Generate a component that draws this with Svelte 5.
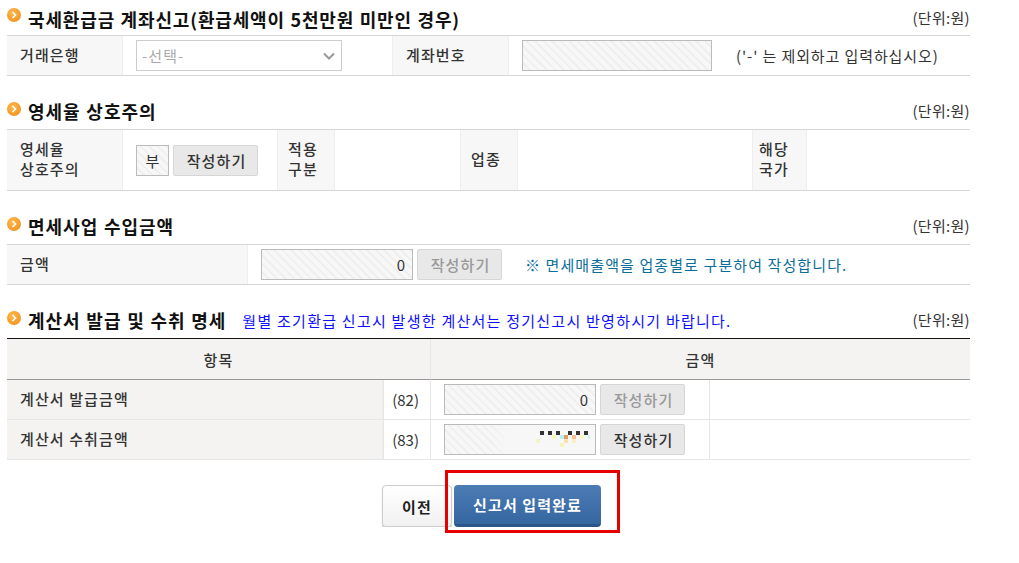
<script lang="ts">
	// mosaic over the blurred amount in row (83): x, y, w, h, colour
	const pixels: [number, number, number, number, string][] = [
		[540, 431, 4, 4, '#333'], [548, 431, 4, 4, '#333'], [556, 431, 4, 4, '#333'],
		[568, 431, 4, 4, '#333'], [576, 431, 4, 4, '#333'], [584, 431, 4, 4, '#333'],
		[552, 435, 4, 4, '#f8f8c0'], [560, 435, 4, 4, '#b8f0f4'], [564, 435, 4, 4, '#d9a060'],
		[572, 435, 4, 4, '#f8c090'], [580, 435, 4, 4, '#f8f8c0'], [588, 435, 2, 4, '#c0f4f8'],
		[536, 439, 4, 4, '#f4f4c8'], [564, 439, 4, 4, '#fce0b0'], [572, 439, 4, 4, '#f8f0c0'],
		[560, 443, 4, 4, '#f8f4b8']
	];
</script>

{#snippet heading(title: string, note?: string)}
	<div class="heading">
		<span class="bullet"><svg viewBox="0 0 14 14" width="14" height="14"><path d="M5.5 4 8.5 7 5.5 10" fill="none" stroke="#fff" stroke-width="1.6" /></svg></span>
		<h2>{title}</h2>
		{#if note}<span class="note">{note}</span>{/if}
		<span class="unit">(단위:원)</span>
	</div>
{/snippet}

<main>
	<section class="s1">
		{@render heading('국세환급금 계좌신고(환급세액이 5천만원 미만인 경우)')}
		<div class="row bank">
			<div class="th">거래은행</div>
			<div class="td">
				<div class="select">-선택-<svg viewBox="0 0 12 8" width="12" height="8"><path d="M1 1.5 6 6.5 11 1.5" fill="none" stroke="#999" stroke-width="2" /></svg></div>
			</div>
			<div class="th">계좌번호</div>
			<div class="td acct">
				<div class="field wide"></div>
				<span class="hint">('-' 는 제외하고 입력하십시오)</span>
			</div>
		</div>
	</section>

	<section class="s2">
		{@render heading('영세율 상호주의')}
		<div class="row zero">
			<div class="th">영세율<br />상호주의</div>
			<div class="td">
				<div class="field tiny">부</div>
				<button class="btn">작성하기</button>
			</div>
			<div class="th">적용<br />구분</div>
			<div class="td"></div>
			<div class="th">업종</div>
			<div class="td"></div>
			<div class="th nation">해당<br />국가</div>
			<div class="td"></div>
		</div>
	</section>

	<section class="s3">
		{@render heading('면세사업 수입금액')}
		<div class="row exempt">
			<div class="th">금액</div>
			<div class="td">
				<div class="field amount">0</div>
				<button class="btn off">작성하기</button>
				<span class="teal">※ 면세매출액을 업종별로 구분하여 작성합니다.</span>
			</div>
		</div>
	</section>

	<section class="s4">
		{@render heading('계산서 발급 및 수취 명세', '월별 조기환급 신고시 발생한 계산서는 정기신고시 반영하시기 바랍니다.')}
		<div class="grid">
			<div class="head">항목</div>
			<div class="head last">금액</div>

			<div class="th item">계산서 발급금액</div>
			<div class="code">(82)</div>
			<div class="cell">
				<div class="field amount">0</div>
				<button class="btn off">작성하기</button>
			</div>
			<div class="rest"></div>

			<div class="th item">계산서 수취금액</div>
			<div class="code">(83)</div>
			<div class="cell">
				<div class="field amount"></div>
				<button class="btn">작성하기</button>
			</div>
			<div class="rest"></div>
		</div>
	</section>

	<div class="actions">
		<button class="prev">이전</button>
		<button class="done">신고서 입력완료</button>
	</div>
</main>

<div class="blur"></div>
{#each pixels as [x, y, w, h, c]}
	<i class="px" style="left:{x}px;top:{y}px;width:{w}px;height:{h}px;background:{c}"></i>
{/each}
<div class="redbox"></div>

<style>
	:global(body) {
		margin: 0;
		background: #fff;
	}

	main {
		width: 963px;
		margin-left: 7px;
		font-family: 'Noto Sans CJK KR', 'Noto Sans', sans-serif;
		font-size: 15px;
		letter-spacing: 1.1px;
		color: #333;
	}

	section {
		display: flex;
		flex-direction: column;
	}

	.s1 { padding-top: 6px; }
	.s2, .s3, .s4 { padding-top: 24px; }

	.heading {
		display: flex;
		align-items: center;
		height: 29px;
	}

	.bullet {
		width: 14px;
		height: 14px;
		border-radius: 50%;
		background: radial-gradient(circle at 40% 35%, #ffb84d, #ee8a14);
		display: block;
		margin-bottom: 11px;
	}

	.bullet svg {
		display: block;
	}

	h2 {
		margin: 0 0 7px 7px;
		font-size: 18px;
		font-weight: 700;
		letter-spacing: 1px;
		word-spacing: 0.6px;
		color: #111;
		line-height: 24px;
		white-space: nowrap;
	}

	.s1 h2 {
		margin-bottom: 4px;
		letter-spacing: 0.85px;
	}

	.note {
		margin: 0 0 7px 16px;
		color: #0f0fff;
		letter-spacing: 1.25px;
		white-space: nowrap;
	}

	.unit {
		margin-left: auto;
		margin-bottom: 8px;
		letter-spacing: 0.3px;
	}

	.s1 .unit {
		margin-bottom: 6px;
	}

	.row {
		display: grid;
		border-top: 1px solid #d6d6d6;
		border-bottom: 1px solid #d6d6d6;
	}

	.bank {
		grid-template-columns: 116px 269px 117px 1fr;
		height: 39px;
	}

	.zero {
		grid-template-columns: 116px 154px 58px 125px 58px 234px 55px 1fr;
		height: 60px;
	}

	.exempt {
		grid-template-columns: 241px 1fr;
		height: 39px;
	}

	.th {
		background: #f7f7f7;
		display: flex;
		align-items: center;
		padding: 0 0 2px 13px;
		line-height: 20px;
		border-right: 1px solid #eee;
		font-weight: 500;
	}

	.row .th + .td {
		padding-left: 13px;
	}

	.row > .th:not(:first-child) {
		border-left: 1px solid #eee;
	}

	.zero > .th:not(:first-child) {
		padding-left: 10px;
	}

	.zero > .th.nation {
		padding-left: 6px;
	}

	.td {
		display: flex;
		align-items: center;
		gap: 4px;
	}

	.select {
		width: 206px;
		height: 31px;
		box-sizing: border-box;
		border: 1px solid #ccc;
		display: flex;
		align-items: center;
		justify-content: space-between;
		padding: 0 6px 0 5px;
		color: #aaa;
	}

	.field {
		box-sizing: border-box;
		height: 31px;
		border: 1px solid #bbb;
		background: repeating-linear-gradient(45deg, #f7f7f7 0 4px, #efefef 4px 6px);
		display: flex;
		align-items: center;
		letter-spacing: 0;
	}

	.wide { width: 190px; }
	.tiny { width: 33px; justify-content: center; }
	.amount { width: 152px; justify-content: flex-end; padding-right: 7px; }

	.acct { gap: 24px; }

	.hint {
		letter-spacing: 0.9px;
		white-space: nowrap;
	}

	.btn {
		box-sizing: border-box;
		width: 85px;
		height: 31px;
		border: 1px solid #d6d6d6;
		border-radius: 2px;
		background: #e8e8e8;
		color: #333;
		font: inherit;
		font-weight: 500;
		letter-spacing: inherit;
		padding: 0 0 0 2px;
	}

	.btn.off { color: #999; }

	.teal {
		margin-left: 19px;
		color: #0b6e9a;
		white-space: nowrap;
	}

	.grid {
		display: grid;
		grid-template-columns: 376px 48px 279px 1fr;
		grid-template-rows: 41px 40px 40px;
		border-top: 1px solid #111;
	}

	.head {
		grid-column: span 2;
		background: #f4f3f1;
		border-bottom: 1px solid #999;
		display: flex;
		align-items: center;
		justify-content: center;
		font-weight: 500;
		border-right: 1px solid #e6e6e6;
	}

	.head.last {
		border-right: 0;
	}

	.item {
		background: #f4f3f1;
		border-bottom: 1px solid #e6e6e6;
	}

	.code, .cell, .rest {
		display: flex;
		align-items: center;
		border-bottom: 1px solid #e6e6e6;
	}

	.code {
		justify-content: flex-end;
		padding-right: 11px;
		letter-spacing: 0;
		border-right: 1px solid #e6e6e6;
		border-left: 1px solid #e6e6e6;
	}

	.cell {
		padding-left: 13px;
		gap: 4px;
		border-right: 1px solid #e6e6e6;
	}

	.actions {
		display: flex;
		padding: 25px 0 0 375px;
		gap: 2px;
		align-items: flex-start;
	}

	.prev {
		width: 70px;
		height: 42px;
		border: 1px solid #ccc;
		border-radius: 4px;
		background: linear-gradient(#fff, #f1f1f1);
		box-shadow: 0 1px 1px #aaa;
		font: inherit;
		font-weight: 700;
		letter-spacing: inherit;
		color: #222;
	}

	.done {
		width: 147px;
		height: 42px;
		border: 0;
		border-radius: 4px;
		background: linear-gradient(#4d7cb5, #34669f);
		border-bottom: 3px solid #2b5689;
		color: #fff;
		font: inherit;
		font-weight: 700;
		letter-spacing: inherit;
	}

	.redbox {
		position: absolute;
		left: 445px;
		top: 470px;
		width: 169px;
		height: 57px;
		border: 3px solid #e60000;
	}

	.blur {
		position: absolute;
		left: 490px;
		top: 425px;
		width: 105px;
		height: 29px;
		background: linear-gradient(90deg, #f7f7f700, #f7f7f7 20%);
	}

	.px {
		position: absolute;
	}
</style>
